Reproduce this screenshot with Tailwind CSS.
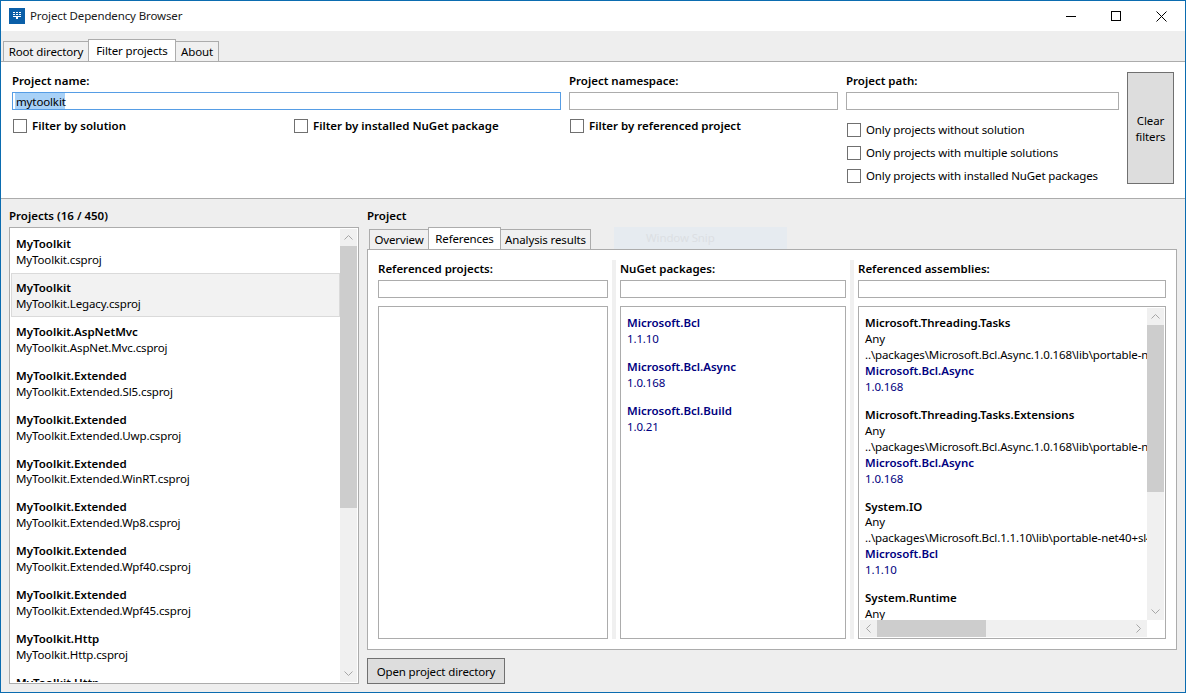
<!doctype html>
<html lang="en">
  <head>
    <meta charset="UTF-8" />
    <title>Project Dependency Browser</title>
    <script src="https://cdn.jsdelivr.net/npm/@tailwindcss/browser@4"></script>
  </head>
  <body class="overflow-hidden bg-[#eeeeee] font-['Noto_Sans',sans-serif] text-[11.5px] leading-[15.96px] tracking-[-0.13px] text-black">
    <div class="flex h-[693px] w-[1186px] flex-col border border-[#0b6cb0] bg-[#eeeeee]">
      <!-- title bar -->
      <header class="flex h-[30px] shrink-0 items-center bg-white pl-[8px]">
        <svg class="size-4" viewBox="0 0 16 16">
          <rect width="16" height="16" fill="#0a5fa8" />
          <path d="M4 4h2v1H4zM7 4h2v1H7zM10 4h2v1h-2zM4 6h2v1H4zM7 6h2v1H7zM10 6h2v1h-2zM4 8h8v1H4zM7 9h2v2H7z" fill="#fff" />
        </svg>
        <span class="ml-[5px] text-[#1a1a1a]">Project Dependency Browser</span>
        <div class="ml-auto flex items-center">
          <svg class="mr-[35px] size-[10px]" viewBox="0 0 10 10"><path d="M0 5.5h10" stroke="#000" fill="none" /></svg>
          <svg class="mr-[35px] size-[10px]" viewBox="0 0 10 10"><rect x=".5" y=".5" width="9" height="9" stroke="#000" fill="none" /></svg>
          <svg class="mr-[18px] size-[11px]" viewBox="0 0 11 11"><path d="M.5.5l10 10M10.5.5l-10 10" stroke="#000" fill="none" /></svg>
        </div>
      </header>

      <!-- main tabs -->
      <nav class="flex h-[30px] shrink-0 items-end pl-[2px]">
        <div class="flex h-[20px] w-[86px] items-center justify-center border border-b-0 border-[#acacac] bg-[#f0f0f0] pt-px">Root directory</div>
        <div class="relative z-10 -ml-px flex h-[22px] w-[88px] items-center justify-center border border-b-0 border-[#acacac] bg-white">Filter projects</div>
        <div class="-ml-px flex h-[20px] w-[44px] items-center justify-center border border-b-0 border-[#acacac] bg-[#f0f0f0] pt-px">About</div>
      </nav>

      <!-- filter panel -->
      <section class="flex h-[138px] shrink-0 border-y border-[#acacac] bg-white pt-[10px] pl-[11px]">
        <div class="w-[549px]">
          <div class="h-[20px] pt-[1px] font-semibold tracking-normal">Project name:</div>
          <div class="flex h-[18px] border border-[#569de5] pl-[2px]"><span class="w-[50px] bg-[#a8d1f7] pt-px pl-px">mytoolkit</span></div>
          <div class="mt-[8px] flex">
            <label class="flex w-[282px] items-center pl-px font-semibold tracking-normal"><span class="mr-[5px] size-[14px] border border-[#707070]"></span>Filter by solution</label>
            <label class="flex items-center font-semibold tracking-normal"><span class="mr-[5px] size-[14px] border border-[#707070]"></span>Filter by installed NuGet package</label>
          </div>
        </div>
        <div class="ml-[8px] w-[269px]">
          <div class="h-[20px] pt-[1px] font-semibold tracking-normal">Project namespace:</div>
          <div class="h-[18px] border border-[#acacac]"></div>
          <label class="mt-[8px] flex items-center pl-px font-semibold tracking-normal"><span class="mr-[5px] size-[14px] border border-[#707070]"></span>Filter by referenced project</label>
        </div>
        <div class="ml-[8px] w-[273px]">
          <div class="h-[20px] pt-[1px] font-semibold tracking-normal">Project path:</div>
          <div class="h-[18px] border border-[#acacac]"></div>
          <div class="mt-[12px] flex flex-col gap-[7px] pl-px">
            <label class="flex items-center"><span class="mr-[5px] size-[14px] border border-[#707070]"></span>Only projects without solution</label>
            <label class="flex items-center"><span class="mr-[5px] size-[14px] border border-[#707070]"></span>Only projects with multiple solutions</label>
            <label class="flex items-center"><span class="mr-[5px] size-[14px] border border-[#707070]"></span>Only projects with installed NuGet packages</label>
          </div>
        </div>
        <button class="ml-[8px] h-[112px] w-[47px] border border-[#707070] bg-[#dddddd] pt-[2px] leading-[16px]">Clear<br />filters</button>
      </section>

      <!-- lower area -->
      <div class="flex min-h-0 flex-1 pt-[8px] pl-[8px]">
        <section class="flex w-[350px] shrink-0 flex-col">
          <div class="h-[20px] pt-[1px] font-semibold tracking-normal">Projects (16 / 450)</div>
          <div class="flex h-[457px] border border-[#acacac] bg-white p-px">
            <ul class="h-full min-w-0 flex-1 overflow-hidden">
              <li class="h-[43.92px] px-[5px] pt-[7px]"><b class="block font-semibold tracking-normal">MyToolkit</b>MyToolkit.csproj</li>
              <li class="h-[43.92px] border border-[#dadada] bg-[#f2f2f2] px-[4px] pt-[6px]"><b class="block font-semibold tracking-normal">MyToolkit</b>MyToolkit.Legacy.csproj</li>
              <li class="h-[43.92px] px-[5px] pt-[7px]"><b class="block font-semibold tracking-normal">MyToolkit.AspNetMvc</b>MyToolkit.AspNet.Mvc.csproj</li>
              <li class="h-[43.92px] px-[5px] pt-[7px]"><b class="block font-semibold tracking-normal">MyToolkit.Extended</b>MyToolkit.Extended.Sl5.csproj</li>
              <li class="h-[43.92px] px-[5px] pt-[7px]"><b class="block font-semibold tracking-normal">MyToolkit.Extended</b>MyToolkit.Extended.Uwp.csproj</li>
              <li class="h-[43.92px] px-[5px] pt-[7px]"><b class="block font-semibold tracking-normal">MyToolkit.Extended</b>MyToolkit.Extended.WinRT.csproj</li>
              <li class="h-[43.92px] px-[5px] pt-[7px]"><b class="block font-semibold tracking-normal">MyToolkit.Extended</b>MyToolkit.Extended.Wp8.csproj</li>
              <li class="h-[43.92px] px-[5px] pt-[7px]"><b class="block font-semibold tracking-normal">MyToolkit.Extended</b>MyToolkit.Extended.Wpf40.csproj</li>
              <li class="h-[43.92px] px-[5px] pt-[7px]"><b class="block font-semibold tracking-normal">MyToolkit.Extended</b>MyToolkit.Extended.Wpf45.csproj</li>
              <li class="h-[43.92px] px-[5px] pt-[7px]"><b class="block font-semibold tracking-normal">MyToolkit.Http</b>MyToolkit.Http.csproj</li>
              <li class="h-[43.92px] px-[5px] pt-[7px]"><b class="block font-semibold tracking-normal">MyToolkit.Http</b>MyToolkit.Http.csproj</li>
            </ul>
            <div class="flex w-[17px] shrink-0 flex-col bg-[#f0f0f0]">
              <svg class="h-[17px] w-[17px] shrink-0" viewBox="0 0 17 17"><path d="M4.5 10.5l4-4 4 4" stroke="#a6a6a6" fill="none" /></svg>
              <div class="h-[262px] bg-[#cdcdcd]"></div>
              <svg class="mt-auto h-[17px] w-[17px] shrink-0" viewBox="0 0 17 17"><path d="M4.5 6.5l4 4 4-4" stroke="#a6a6a6" fill="none" /></svg>
            </div>
          </div>
        </section>

        <section class="ml-[8px] flex w-[810px] shrink-0 flex-col">
          <div class="h-[20px] pt-[1px] font-semibold tracking-normal">Project</div>
          <!-- project tabs, the grey box is a leftover of the snipping tool -->
          <div class="relative flex h-[22px] items-end pl-[2px]">
            <div class="flex h-[20px] w-[60px] items-center justify-center border border-b-0 border-[#acacac] bg-[#f0f0f0] pt-px">Overview</div>
            <div class="relative z-10 -ml-px flex h-[22px] w-[73px] items-center justify-center border border-b-0 border-[#acacac] bg-white">References</div>
            <div class="-ml-px flex h-[20px] w-[91px] items-center justify-center border border-b-0 border-[#acacac] bg-[#f0f0f0] pt-px">Analysis results</div>
            <div class="absolute top-0 left-[247px] flex h-[22px] w-[173px] items-center bg-[#e6ebf0] pl-[32px] text-[#dcdfe3]">Window Snip</div>
          </div>

          <div class="flex h-[401px] border border-[#acacac] bg-white px-[10px] pt-[10px]">
            <div class="w-[230px] shrink-0">
              <div class="h-[20px] pt-[1px] font-semibold tracking-normal">Referenced projects:</div>
              <div class="h-[18px] border border-[#acacac]"></div>
              <div class="mt-[8px] h-[333px] border border-[#acacac]"></div>
            </div>
            <div class="mx-[4px] h-[379px] w-[4px] shrink-0 bg-[#f0f0f0]"></div>
            <div class="w-[226px] shrink-0">
              <div class="h-[20px] pt-[1px] font-semibold tracking-normal">NuGet packages:</div>
              <div class="h-[18px] border border-[#acacac]"></div>
              <div class="mt-[8px] flex h-[333px] flex-col gap-[12px] border border-[#acacac] pt-[8px] pl-[6px] text-[#000080]">
                <div><b class="block font-semibold tracking-normal">Microsoft.Bcl</b>1.1.10</div>
                <div><b class="block font-semibold tracking-normal">Microsoft.Bcl.Async</b>1.0.168</div>
                <div><b class="block font-semibold tracking-normal">Microsoft.Bcl.Build</b>1.0.21</div>
              </div>
            </div>
            <div class="mx-[4px] h-[379px] w-[4px] shrink-0 bg-[#f0f0f0]"></div>
            <div class="w-[308px] shrink-0">
              <div class="h-[20px] pt-[1px] font-semibold tracking-normal">Referenced assemblies:</div>
              <div class="h-[18px] border border-[#acacac]"></div>
              <div class="mt-[8px] grid h-[333px] grid-cols-[1fr_17px] grid-rows-[1fr_17px] border border-[#acacac] p-px">
                <div class="flex min-h-0 min-w-0 flex-col gap-[12px] overflow-hidden pt-[7px] pl-[5px] whitespace-nowrap">
                  <div><b class="block font-semibold tracking-normal">Microsoft.Threading.Tasks</b>Any<br />..\packages\Microsoft.Bcl.Async.1.0.168\lib\portable-net40+sl4+win8+wp71<div class="text-[#000080]"><b class="block font-semibold tracking-normal">Microsoft.Bcl.Async</b>1.0.168</div></div>
                  <div><b class="block font-semibold tracking-normal">Microsoft.Threading.Tasks.Extensions</b>Any<br />..\packages\Microsoft.Bcl.Async.1.0.168\lib\portable-net40+sl4+win8+wp71<div class="text-[#000080]"><b class="block font-semibold tracking-normal">Microsoft.Bcl.Async</b>1.0.168</div></div>
                  <div><b class="block font-semibold tracking-normal">System.IO</b>Any<br />..\packages\Microsoft.Bcl.1.1.10\lib\portable-net40+sl4+win8+wp71<div class="text-[#000080]"><b class="block font-semibold tracking-normal">Microsoft.Bcl</b>1.1.10</div></div>
                  <div><b class="block font-semibold tracking-normal">System.Runtime</b>Any</div>
                </div>
                <div class="flex flex-col bg-[#f0f0f0]">
                  <svg class="h-[17px] w-[17px] shrink-0" viewBox="0 0 17 17"><path d="M4.5 10.5l4-4 4 4" stroke="#a6a6a6" fill="none" /></svg>
                  <div class="h-[167px] bg-[#cdcdcd]"></div>
                  <svg class="mt-auto h-[17px] w-[17px] shrink-0" viewBox="0 0 17 17"><path d="M4.5 6.5l4 4 4-4" stroke="#a6a6a6" fill="none" /></svg>
                </div>
                <div class="flex bg-[#f0f0f0]">
                  <svg class="h-[17px] w-[17px] shrink-0" viewBox="0 0 17 17"><path d="M10.5 4.5l-4 4 4 4" stroke="#a6a6a6" fill="none" /></svg>
                  <div class="w-[109px] bg-[#cdcdcd]"></div>
                  <svg class="ml-auto h-[17px] w-[17px] shrink-0" viewBox="0 0 17 17"><path d="M6.5 4.5l4 4-4 4" stroke="#a6a6a6" fill="none" /></svg>
                </div>
                <div></div>
              </div>
            </div>
          </div>

          <button class="mt-[8px] h-[26px] w-[138px] border border-[#707070] bg-[#dddddd] pt-px">Open project directory</button>
        </section>
      </div>
    </div>
  </body>
</html>
